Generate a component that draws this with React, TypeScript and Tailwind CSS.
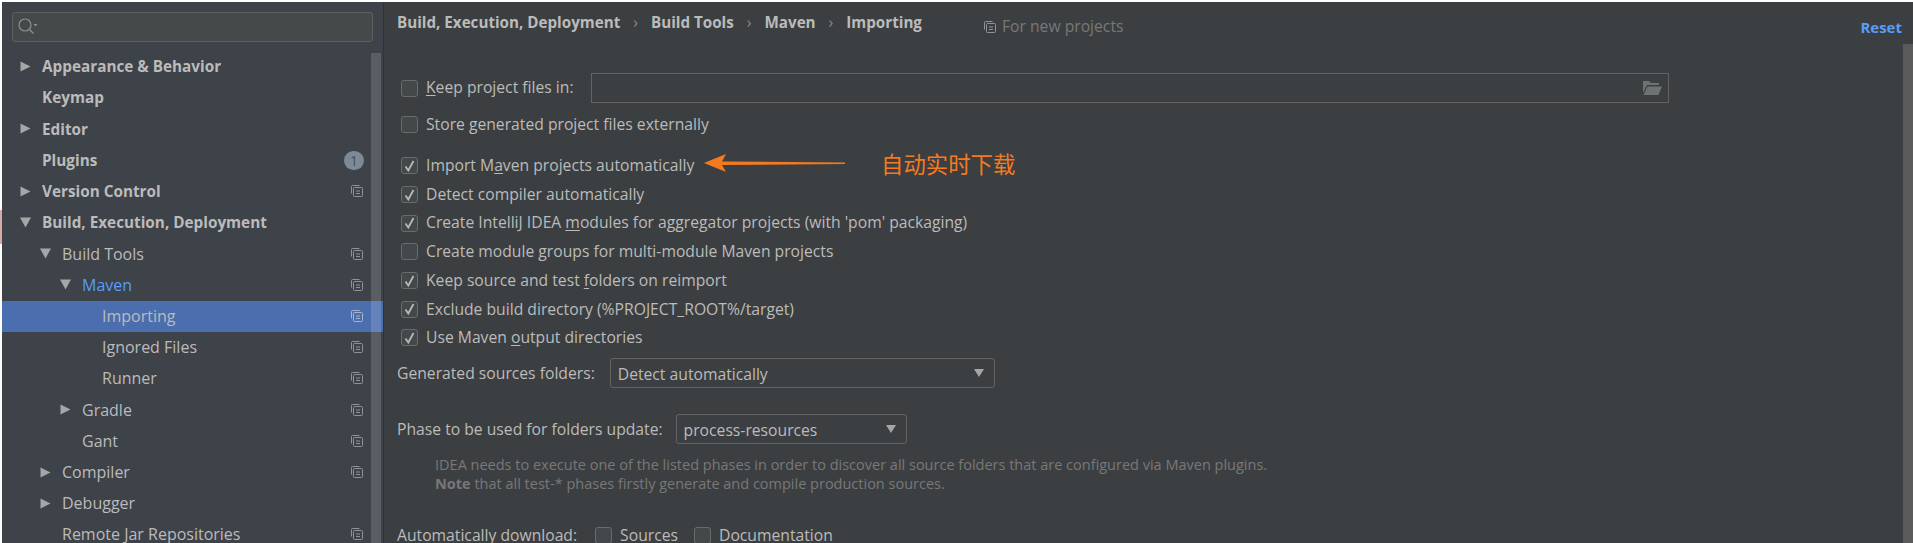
import React from 'react'

type TreeItem = {
  label: string
  level: number
  arrow?: 'right' | 'down'
  bold?: boolean
  copy?: boolean
  active?: boolean
  selected?: boolean
  badge?: boolean
}

const tree: TreeItem[] = [
  { label: 'Appearance & Behavior', level: 0, arrow: 'right', bold: true },
  { label: 'Keymap', level: 0, bold: true },
  { label: 'Editor', level: 0, arrow: 'right', bold: true },
  { label: 'Plugins', level: 0, bold: true, badge: true },
  { label: 'Version Control', level: 0, arrow: 'right', bold: true, copy: true },
  { label: 'Build, Execution, Deployment', level: 0, arrow: 'down', bold: true },
  { label: 'Build Tools', level: 1, arrow: 'down', copy: true },
  { label: 'Maven', level: 2, arrow: 'down', copy: true, active: true },
  { label: 'Importing', level: 3, copy: true, selected: true },
  { label: 'Ignored Files', level: 3, copy: true },
  { label: 'Runner', level: 3, copy: true },
  { label: 'Gradle', level: 2, arrow: 'right', copy: true },
  { label: 'Gant', level: 2, copy: true },
  { label: 'Compiler', level: 1, arrow: 'right', copy: true },
  { label: 'Debugger', level: 1, arrow: 'right' },
  { label: 'Remote Jar Repositories', level: 1, copy: true },
]

const indent = ['pl-[18px]', 'pl-[38px]', 'pl-[58px]', 'pl-[78px]']

function CopyIcon({ light }: { light?: boolean }) {
  const c = light ? '#a9b4cc' : '#8f9397'
  return (
    <svg width="12" height="12" viewBox="0 0 12 12" fill="none" stroke={c} strokeWidth="1">
      <path d="M8.5 .5H1.5A1 1 0 0 0 .5 1.5V8.5" />
      <rect x="2.5" y="2.5" width="9" height="9" rx="1" />
      <path d="M5 6h4M5 8.5h4" />
    </svg>
  )
}

function Arrow({ dir }: { dir: 'right' | 'down' }) {
  return (
    <svg width="11" height="11" viewBox="0 0 11 11" fill="#a6a6a6">
      {dir === 'right' ? <path d="M0.5 0.5L10.5 5.5L0.5 10.5Z" /> : <path d="M0 0.5H11L5.5 10.5Z" />}
    </svg>
  )
}

function TreeRow({ item }: { item: TreeItem }) {
  return (
    <div
      className={`relative flex h-[31.2px] shrink-0 items-center ${indent[item.level]} ${item.selected ? 'bg-[#4b6eaf]' : ''}`}
    >
      <span className="flex w-[22px] shrink-0 items-center">{item.arrow && <Arrow dir={item.arrow} />}</span>
      <span
        className={`flex-1 whitespace-nowrap ${item.bold ? 'text-[15.3px] font-bold' : 'text-[16px]'} ${item.active ? 'text-[#589df6]' : 'text-[#bbbbbb]'}`}
      >
        {item.label}
      </span>
      {item.copy && (
        <span className="mr-[20px] flex">
          <CopyIcon light={item.selected} />
        </span>
      )}
      {item.badge && (
        <span className="mr-[19px] flex h-[19px] w-[20px] items-center justify-center rounded-full bg-[#7d8a96] text-[14px] text-[#4a4f57]">
          1
        </span>
      )}
    </div>
  )
}

function Check({ on }: { on?: boolean }) {
  return (
    <span className="flex h-[17px] w-[17px] shrink-0 items-center justify-center rounded-[3px] border border-[#6b6b6b] bg-[#43494a]">
      {on && (
        <svg width="11" height="12" viewBox="0 0 11 12" fill="none" stroke="#b9b9b9" strokeWidth="1.8">
          <path d="M1.5 6.5L4.3 10.5L9.5 1" />
        </svg>
      )}
    </span>
  )
}

// underlines the mnemonic letter at position `u`
function Label({ text, u }: { text: string; u?: number }) {
  if (u === undefined) return <span>{text}</span>
  return (
    <span>
      {text.slice(0, u)}
      <span className="underline underline-offset-2">{text[u]}</span>
      {text.slice(u + 1)}
    </span>
  )
}

const options: { text: string; on: boolean; u?: number }[] = [
  { text: 'Import Maven projects automatically', on: true, u: 8 },
  { text: 'Detect compiler automatically', on: true },
  { text: "Create IntelliJ IDEA modules for aggregator projects (with 'pom' packaging)", on: true, u: 21 },
  { text: 'Create module groups for multi-module Maven projects', on: false, u: 14 },
  { text: 'Keep source and test folders on reimport', on: true, u: 21 },
  { text: 'Exclude build directory (%PROJECT_ROOT%/target)', on: true },
  { text: 'Use Maven output directories', on: true, u: 10 },
]

function Select({ value, width }: { value: string; width: string }) {
  return (
    <div className={`flex h-[30px] items-center justify-between rounded-[3px] border border-[#646464] bg-[#3c3f41] pl-[7px] pr-[10px] ${width}`}>
      <span className="pt-[2px]">{value}</span>
      <svg width="10" height="8" viewBox="0 0 10 8" fill="#a6a6a6">
        <path d="M0 0H10L5 8Z" />
      </svg>
    </div>
  )
}

export default function App() {
  return (
    <div className="relative flex h-[543px] w-[1913px] flex-col overflow-hidden bg-white font-['Open_Sans','Noto_Sans',sans-serif]">
      <div className="flex min-h-0 flex-1 pt-[2px]">
        {/* sidebar */}
        <div className="relative ml-[2px] flex w-[381px] shrink-0 flex-col bg-[#3e4249]">
          <div className="mx-[10px] mt-[10px] flex h-[30px] shrink-0 items-center rounded-[3px] border border-[#5e6060] bg-[#45494a] pl-[5px]">
            <svg width="20" height="18" viewBox="0 0 20 18" fill="none" stroke="#8d8f90" strokeWidth="1.2">
              <circle cx="7" cy="7" r="6" />
              <path d="M11.5 11.5l4 4" />
              <path d="M15.5 6h4l-2 2.4Z" fill="#8d8f90" stroke="none" />
            </svg>
          </div>
          <div className="mt-[9px] flex flex-col">
            {tree.map(item => (
              <TreeRow key={item.label} item={item} />
            ))}
          </div>
          {/* scrollbar */}
          <div className="absolute bottom-0 right-[2px] top-[51px] w-[10px] bg-white/15" />
        </div>
        <div className="w-[1px] shrink-0 bg-[#323232]" />
        {/* settings panel */}
        <div className="relative flex min-w-0 flex-1 flex-col overflow-hidden bg-[#3c3f41] text-[15.7px] text-[#bbbbbb]">
          <div className="flex h-[41px] shrink-0 items-center pl-[13px]">
            <span className="text-[15.2px] font-bold">Build, Execution, Deployment</span>
            <span className="mx-[13px] text-[#8a8a8a]">›</span>
            <span className="text-[15.2px] font-bold">Build Tools</span>
            <span className="mx-[13px] text-[#8a8a8a]">›</span>
            <span className="text-[15.2px] font-bold">Maven</span>
            <span className="mx-[13px] text-[#8a8a8a]">›</span>
            <span className="text-[15.2px] font-bold">Importing</span>
            <span className="ml-[62px] flex items-center gap-[6px] pt-[9px] text-[#787878]">
              <CopyIcon />
              For new projects
            </span>
            <span className="ml-auto mr-[11px] pt-[9px] text-[15px] font-bold text-[#589df6]">Reset</span>
          </div>

          <div className="flex shrink-0 flex-col pl-[17px]">
            <div className="mt-[30px] flex h-[30px] items-center gap-[8px]">
              <Check />
              <Label text="Keep project files in:" u={0} />
              <div className="ml-[9px] flex h-[30px] w-[1078px] items-center justify-end border border-[#646464] pr-[6px]">
                <svg width="20" height="16" viewBox="0 0 20 16" fill="#6d7372">
                  <path d="M1 1h6l2 2h8v2H5L1 13Z" />
                  <path d="M5.5 6.5H20L16.5 15H1.5Z" />
                </svg>
              </div>
            </div>
            <div className="mt-[7.5px] flex h-[28px] items-center gap-[8px]">
              <Check />
              <span>Store generated project files externally</span>
            </div>

            <div className="mt-[13px] flex flex-col">
              {options.map(o => (
                <div key={o.text} className="flex h-[28.7px] items-center gap-[8px]">
                  <Check on={o.on} />
                  <Label text={o.text} u={o.u} />
                </div>
              ))}
            </div>
          </div>

          <div className="flex shrink-0 flex-col pl-[13px]">
            <div className="mt-[6px] flex items-center gap-[15px]">
              <span>Generated sources folders:</span>
              <Select value="Detect automatically" width="w-[385px]" />
            </div>
            <div className="mt-[26px] flex items-center gap-[13px]">
              <span>Phase to be used for folders update:</span>
              <Select value="process-resources" width="w-[231px]" />
            </div>
            <div className="mt-[12px] pl-[38px] text-[14.5px] leading-[18.5px] text-[#787878]">
              <div>IDEA needs to execute one of the listed phases in order to discover all source folders that are configured via Maven plugins.</div>
              <div>
                <b>Note</b> that all test-* phases firstly generate and compile production sources.
              </div>
            </div>
            <div className="mt-[30.5px] flex items-center gap-[10px]">
              <span>Automatically download:</span>
              <span className="ml-[8px]">
                <Check />
              </span>
              <span className="-ml-[2px]">
                <Label text="Sources" u={4} />
              </span>
              <span className="ml-[6px]">
                <Check />
              </span>
              <span className="-ml-[2px]">
                <Label text="Documentation" u={0} />
              </span>
            </div>
          </div>

          {/* annotation drawn over the screenshot */}
          <svg className="absolute left-[320px] top-[150px]" width="142" height="22" viewBox="0 0 142 22" fill="#f47a20">
            <path d="M0 11L22 2L18 9.5L141 10.5V12L18 13L22 20Z" />
          </svg>
          <span className="absolute left-[497px] top-[146px] font-['Noto_Sans_CJK_SC',sans-serif] text-[22.4px] leading-[30px] text-[#f47a20]">
            自动实时下载
          </span>

          {/* right scrollbar */}
          <div className="absolute bottom-0 right-0 top-[42px] w-[10px] bg-[#5a5a5a]" />
        </div>
      </div>
      {/* sliver of the window behind, on the left edge */}
      <div className="absolute left-0 top-[210px] h-[34px] w-[2px] bg-[#d9a9a9]" />
    </div>
  )
}
